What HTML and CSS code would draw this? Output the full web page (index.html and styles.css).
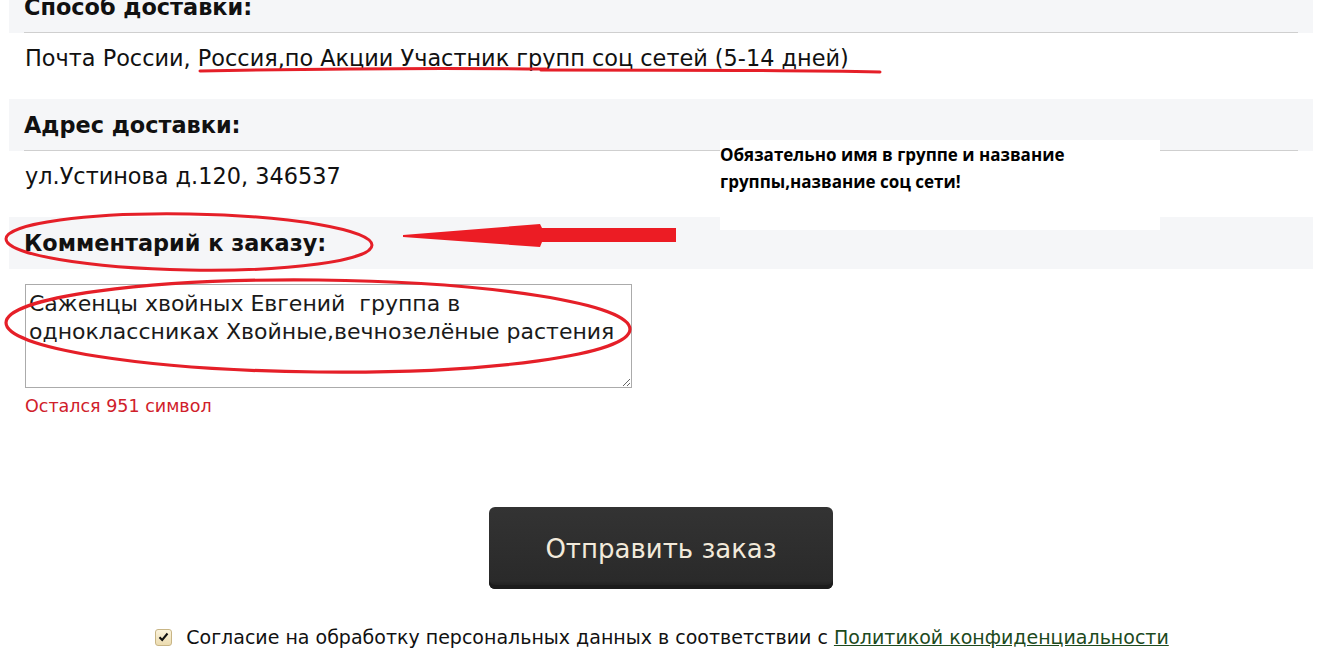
FILE: index.html
```html
<!DOCTYPE html>
<html lang="ru">
<head>
<meta charset="utf-8">
<title>Оформление заказа</title>
<link rel="stylesheet" href="styles.css">
</head>
<body>
<div class="page">
  <div class="section">
    <div class="head"><div class="head-title">Способ доставки:</div></div>
    <div class="value"><span>Почта России, Россия,по Акции Участник групп соц сетей (5-14 дней)</span></div>
  </div>
  <div class="section">
    <div class="head"><div class="head-title">Адрес доставки:</div></div>
    <div class="value"><span>ул.Устинова д.120, 346537</span></div>
  </div>
  <div class="section">
    <div class="head"><div class="head-title nobar">Комментарий к заказу:</div></div>
    <div class="comment">
      <textarea class="comment-box">Саженцы хвойных Евгений  группа в одноклассниках Хвойные,вечнозелёные растения</textarea>
      <div class="counter">Остался 951 символ</div>
    </div>
  </div>
  <div class="submit-row">
    <button class="submit">Отправить заказ</button>
  </div>
  <div class="agree">
    <span class="check"><svg width="11" height="10" viewBox="0 0 11 10"><path d="M1.5 5.2 L4.2 8 L9.5 1.5" fill="none" stroke="#111" stroke-width="2"/></svg></span>
    <span class="agree-text">Согласие на обработку персональных данных в соответствии с <a href="#" class="agree-link">Политикой конфиденциальности</a></span>
  </div>

  <div class="note">Обязательно имя в группе и название группы,название соц сети!</div>

  <svg class="marks" width="1318" height="658" viewBox="0 0 1318 658">
    <path d="M200 71 C300 69 450 68 546 69" fill="none" stroke="#e51f28" stroke-width="3" stroke-linecap="round"/>
    <path d="M541 70 C650 70 780 70 880 72" fill="none" stroke="#e51f28" stroke-width="3" stroke-linecap="round"/>
    <polygon points="403,235 540,224 542,228 676,228 676,242 542,242 540,247 403,237" fill="#ec1c24"/>
    <ellipse cx="189" cy="242" rx="183" ry="28" fill="none" stroke="#e51f28" stroke-width="3" transform="rotate(1 189 242)"/>
    <ellipse cx="318" cy="326" rx="312" ry="46" fill="none" stroke="#e51f28" stroke-width="3.2" transform="rotate(0.6 318 326)"/>
  </svg>
</div>
</body>
</html>
```
FILE: styles.css
```css
html, body {
  margin: 0;
  padding: 0;
  background: #fff;
}
body {
  font-family: "DejaVu Sans", Verdana, sans-serif;
  color: #111;
  overflow: hidden;
}
.page {
  position: relative;
  width: 1318px;
  height: 658px;
  overflow: hidden;
}
.section {
  margin: 0 5px 0 9px;
}
.section:first-child {
  margin-top: -19px;
}
.head {
  background: #f5f6f8;
  padding: 0 15px;
}
.head-title {
  height: 51px;
  border-bottom: 1px solid #cfcfcf;
  display: flex;
  align-items: center;
  font-weight: bold;
  font-size: 22.4px;
  color: #111;
}
.head-title.nobar {
  border-bottom-color: #f5f6f8;
}
.value {
  height: 53px;
  padding: 13px 16px 0;
  font-size: 22.4px;
  line-height: 24px;
  color: #111;
}
.comment {
  padding: 15px 16px 0;
}
.comment-box {
  display: block;
  width: 607px;
  height: 104px;
  box-sizing: border-box;
  border: 1px solid #ababab;
  padding: 5px 3px;
  margin: 0;
  font-family: "DejaVu Sans", sans-serif;
  font-size: 22px;
  line-height: 28px;
  color: #1a1a1a;
  resize: both;
  overflow: hidden;
}
.counter {
  margin-top: 8px;
  font-size: 17.5px;
  line-height: 20px;
  color: #d0202a;
}
.submit-row {
  display: flex;
  justify-content: center;
  padding: 91px 0 0 4px;
}
.submit {
  width: 344px;
  height: 82px;
  border: none;
  border-radius: 6px;
  background: linear-gradient(#333 0%, #2a2a2a 90%, #1b1b1b 100%);
  box-shadow: inset 0 -4px 0 #1c1c1c;
  color: #f2eadb;
  font-family: "DejaVu Sans", sans-serif;
  font-size: 26px;
  padding: 2px 0 0;
}
.agree {
  display: flex;
  align-items: center;
  justify-content: center;
  gap: 14px;
  margin-top: 37px;
  padding-left: 6px;
  font-size: 19px;
  color: #111;
}
.check {
  width: 15px;
  height: 15px;
  border: 1px solid #c8b585;
  border-radius: 3px;
  background: linear-gradient(#fbf3dc, #ecdcb0);
  display: flex;
  align-items: center;
  justify-content: center;
}
.agree-link {
  color: #1d4a1d;
  text-decoration: underline;
}
.note {
  position: absolute;
  left: 720px;
  top: 140px;
  width: 440px;
  height: 90px;
  box-sizing: border-box;
  background: #fff;
  padding: 1px 80px 0 0;
  font-family: "Open Sans", "Noto Sans", sans-serif;
  font-weight: bold;
  font-size: 17px;
  line-height: 27px;
  color: #000;
}
.marks {
  position: absolute;
  left: 0;
  top: 0;
  pointer-events: none;
}
```
